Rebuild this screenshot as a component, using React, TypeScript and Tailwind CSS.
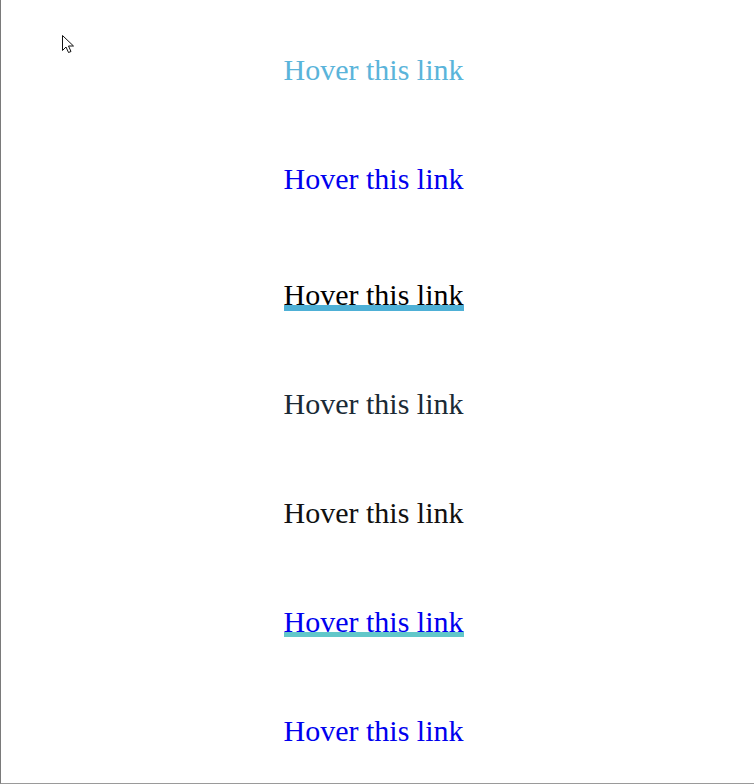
import React from "react";

const serif = { fontFamily: '"Liberation Serif", "Times New Roman", serif' };

export default function App() {
  return (
    <div className="relative w-[754px] h-[784px] bg-white border-l border-b border-l-[#7a7a7a] border-b-[#9a9a9a] overflow-hidden">
      <svg className="absolute left-[61px] top-[35px]" width="14" height="20" viewBox="0 0 14 20">
        <path d="M0.5 0.5 L0.5 15.5 L4 12 L6.5 17.5 L9 16.5 L6.5 11 L11.5 11 Z" fill="white" stroke="#111" strokeWidth="1" strokeLinejoin="miter" />
      </svg>
      <div className="w-[745px] flex flex-col">
        <div className="mt-[53px] h-[34px] leading-[34px] text-[30px] flex justify-center" style={serif}>
          <span className="text-[#5ab4da]">Hover this link</span>
        </div>
        <div className="mt-[75px] h-[34px] leading-[34px] text-[30px] flex justify-center" style={serif}>
          <span className="text-[#0000ee]">Hover this link</span>
        </div>
        <div className="mt-[82px] h-[34px] leading-[34px] text-[30px] flex justify-center" style={serif}>
          <span className="relative text-black">
            <span className="absolute left-0 right-0 top-[27px] h-[6px] bg-[#4eb0d6]"></span>
            <span className="relative">Hover this link</span>
          </span>
        </div>
        <div className="mt-[75px] h-[34px] leading-[34px] text-[30px] flex justify-center" style={serif}>
          <span className="text-[#1a2a35]">Hover this link</span>
        </div>
        <div className="mt-[75px] h-[34px] leading-[34px] text-[30px] flex justify-center" style={serif}>
          <span className="text-[#111111]">Hover this link</span>
        </div>
        <div className="mt-[75px] h-[34px] leading-[34px] text-[30px] flex justify-center" style={serif}>
          <span className="relative text-[#0000ee]">
            <span className="absolute left-0 right-0 top-[27px] h-[5px] bg-[#62c7c9]"></span>
            <span className="relative">Hover this link</span>
          </span>
        </div>
        <div className="mt-[75px] h-[34px] leading-[34px] text-[30px] flex justify-center" style={serif}>
          <span className="text-[#0000ee]">Hover this link</span>
        </div>
      </div>
    </div>
  );
}
